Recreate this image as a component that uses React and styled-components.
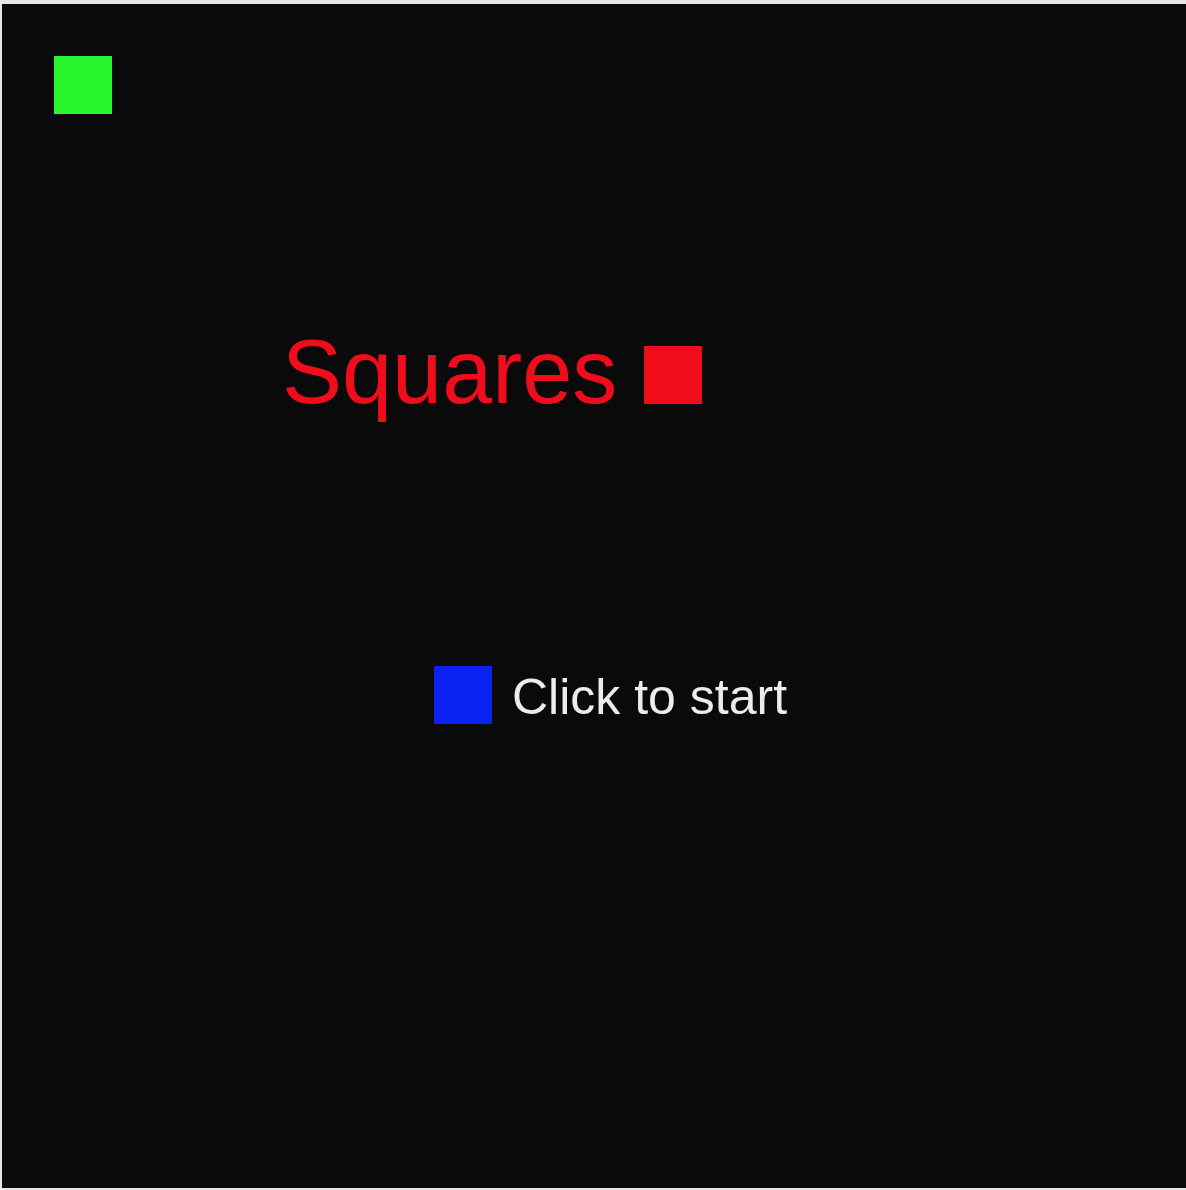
import React from 'react'
import styled, { createGlobalStyle } from 'styled-components'

const GlobalStyle = createGlobalStyle`
  body {
    margin: 0;
    padding: 4px 0 0 2px;
    background: #e6e6e6;
    font-family: "Liberation Sans", Arial, sans-serif;
    overflow: hidden;
  }
`

const App = () => {
  return (
    <>
      <GlobalStyle />
      <Stage>
        <Block color="#29f52e" x={52} y={52} />
        <Title>Squares</Title>
        <Block color="#f00c1a" x={642} y={342} />
        <Block color="#0a22f0" x={432} y={662} />
        <Prompt>Click to start</Prompt>
      </Stage>
    </>
  )
}

// game canvas: sprites sit at their own coordinates
const Stage = styled.main`
  position: relative;
  width: 1184px;
  height: 1184px;
  background: #0a0a0a;
`

const Block = styled.div`
  position: absolute;
  left: ${(p) => p.x}px;
  top: ${(p) => p.y}px;
  width: 58px;
  height: 58px;
  background: ${(p) => p.color};
`

const Title = styled.h1`
  position: absolute;
  left: 280px;
  top: 323px;
  margin: 0;
  font-size: 90px;
  font-weight: normal;
  line-height: 1;
  color: #f00c1a;
`

const Prompt = styled.p`
  position: absolute;
  left: 510px;
  top: 668px;
  margin: 0;
  font-size: 50px;
  line-height: 1;
  color: #ececec;
`

export default App
